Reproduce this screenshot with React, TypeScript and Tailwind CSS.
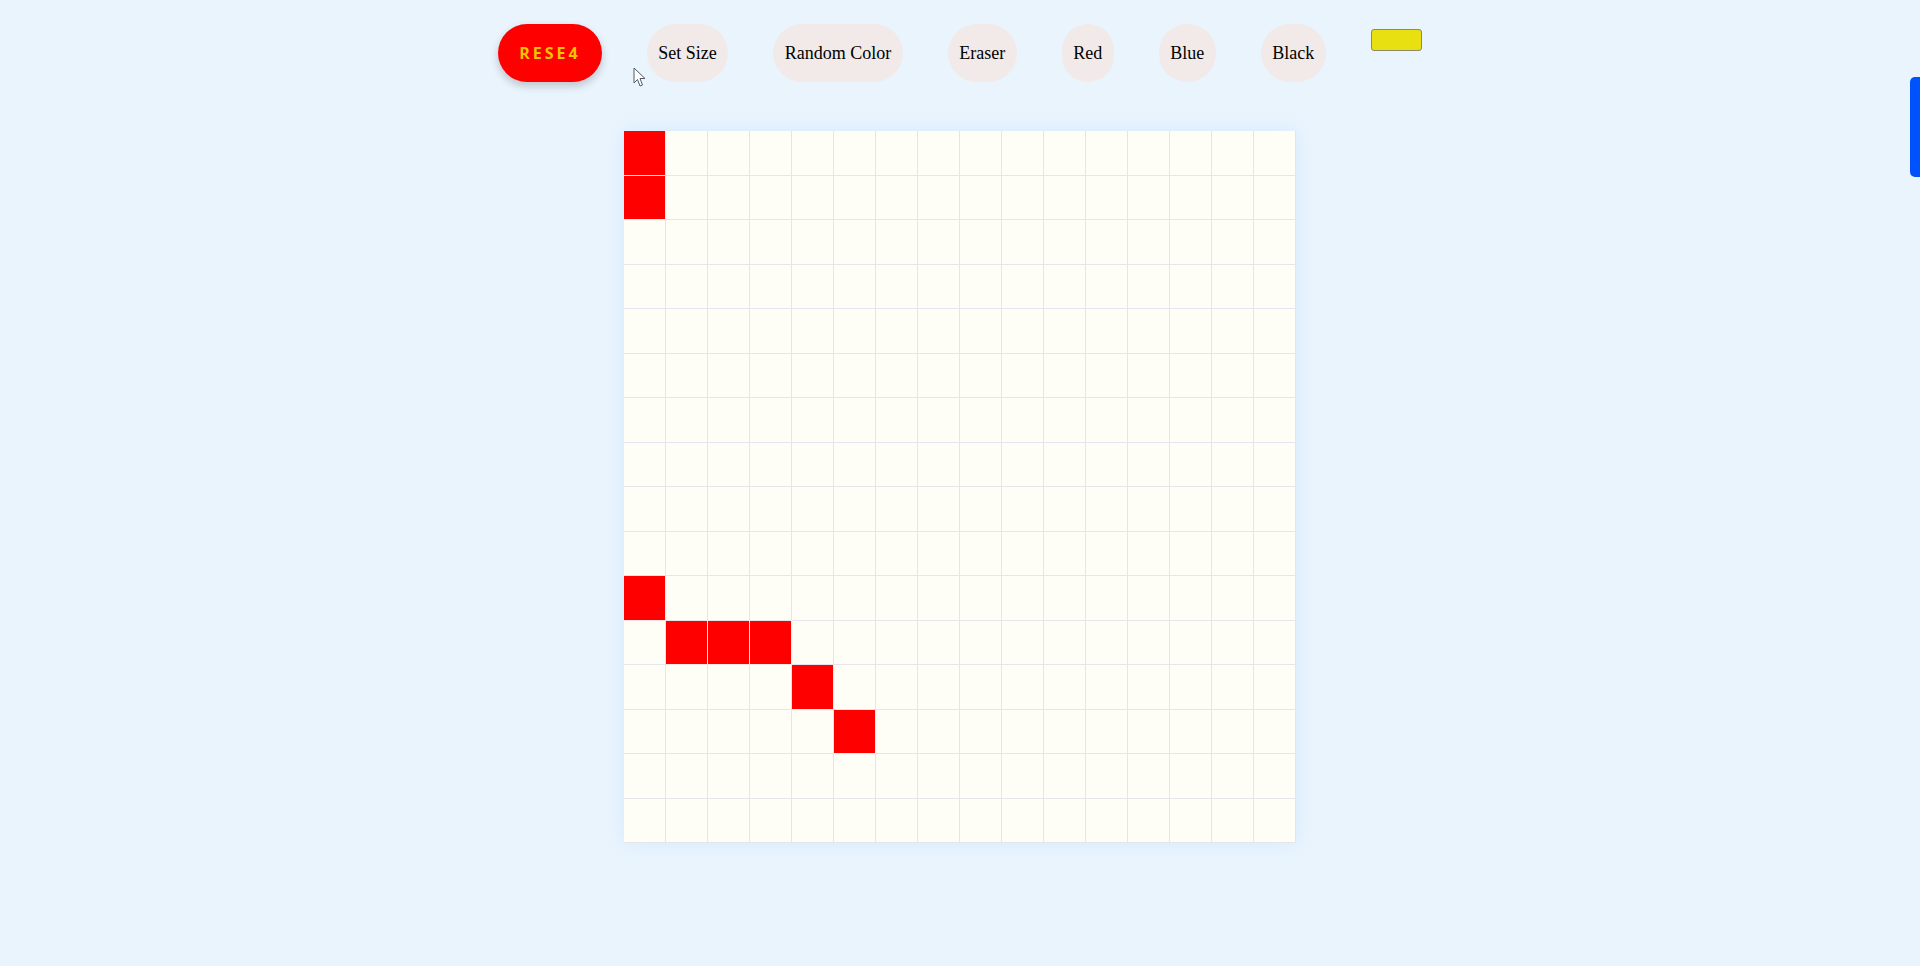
import React, { useState } from 'react';

// cells painted red in the captured frame: row -> columns
const painted: Record<number, number[]> = {
  0: [0],
  1: [0],
  10: [0],
  11: [1, 2, 3],
  12: [4],
  13: [5],
};

const SIZE = 16;

const tools = ['Set Size', 'Random Color', 'Eraser', 'Red', 'Blue', 'Black'];

const App: React.FC = () => {
  const [cells] = useState(() =>
    Array.from({ length: SIZE * SIZE }, (_, i) => {
      const r = Math.floor(i / SIZE);
      const c = i % SIZE;
      return (painted[r] || []).includes(c);
    })
  );

  return (
    <div className="relative min-h-[966px] overflow-hidden bg-[#eaf4fd]">
      {/* Toolbar */}
      <div className="flex items-start justify-center gap-[45px] pt-[24px]">
        <button className="h-[58px] rounded-full bg-[#ff0000] px-[21px] font-['Open_Sans',sans-serif] text-[16px] font-bold tracking-[3px] text-[#f6c400] shadow-[0_4px_8px_rgba(0,0,0,0.2)]">
          RESE4
        </button>
        {tools.map((label) => (
          <button
            key={label}
            className="h-[58px] rounded-full bg-[#f1eae8] px-[11.5px] font-['Liberation_Serif',serif] text-[18px] text-black"
          >
            {label}
          </button>
        ))}
        <div className="mt-[5px] h-[22px] w-[51px] rounded-[3px] border border-[#8a8a6a] bg-[#e8e010]" />
      </div>

      {/* Sketch grid */}
      <div className="mt-[49px] flex justify-center">
        <div className="grid h-[712px] w-[672px] grid-cols-16 grid-rows-16 bg-[#fefef6] shadow-[0_0_18px_rgba(120,200,255,0.18)]">
          {cells.map((on, i) => (
            <div
              key={i}
              className={
                on
                  ? 'border-r border-b border-[#fde6e6] bg-[#ff0000]'
                  : 'border-r border-b border-[#e6e5ec]'
              }
            />
          ))}
        </div>
      </div>

      {/* mouse pointer captured in the frame */}
      <svg
        className="absolute left-[633px] top-[67px]"
        width="13"
        height="21"
        viewBox="0 0 13 21"
      >
        <path
          d="M1 1 L1 16 L4.5 12.5 L7 19 L9.5 18 L7 11.5 L12 11.5 Z"
          fill="#ffffff"
          stroke="#555a66"
          strokeWidth="1"
          strokeLinejoin="round"
        />
      </svg>

      {/* blue edge tab */}
      <div className="absolute right-0 top-[77px] h-[100px] w-[10px] rounded-l-[5px] bg-[#0052ff]" />
    </div>
  );
};

export default App;
